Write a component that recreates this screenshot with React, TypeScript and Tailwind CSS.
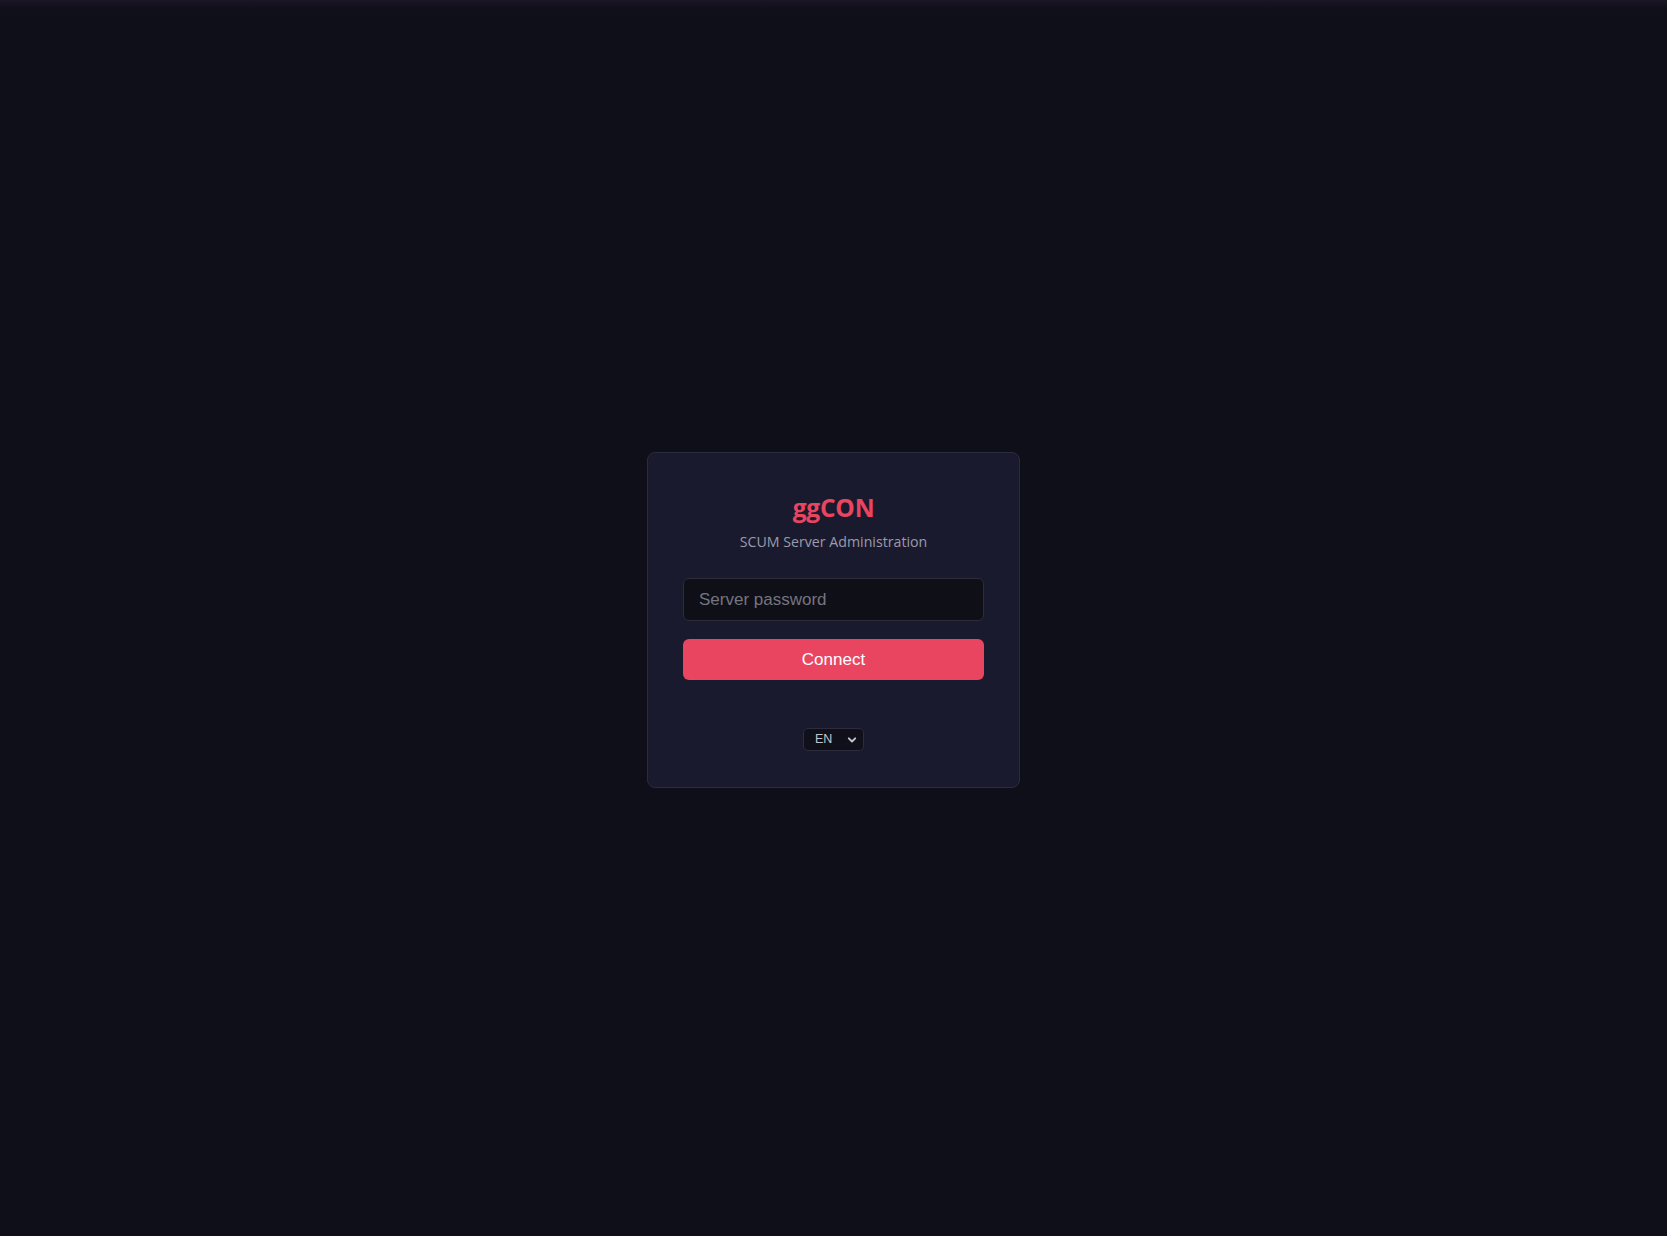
import { useState } from "react";

export default function App() {
  const [password, setPassword] = useState("");
  const [lang, setLang] = useState("en");

  return (
    <main className="flex min-h-screen items-center justify-center bg-[linear-gradient(180deg,#1a1626_0px,#111019_8px,#0f0f1a_16px)] pt-[4px] font-['Open_Sans',sans-serif]">
      <div className="flex w-[373px] flex-col rounded-lg border border-[#2a2b3d] bg-[#1a1a2e] px-[35px] pb-[36px] pt-[35px]">
        <h1 className="text-center text-[24.5px] font-bold leading-[40px] tracking-[-0.2px] text-[#e94560]">ggCON</h1>
        <p className="mt-[4px] text-center text-[14.2px] leading-[20px] text-[#9a9aab]">
          SCUM Server Administration
        </p>

        <input
          type="password"
          value={password}
          onChange={(event) => setPassword(event.target.value)}
          placeholder="Server password"
          className="mt-[26px] h-[43px] w-full rounded-md border border-[#2c2c3c] bg-[#0f0f18] px-[15px] font-['Liberation_Sans',Arial,sans-serif] text-[17px] text-gray-200 outline-none placeholder:text-[#75757f]"
        />

        <button
          type="button"
          className="mt-[18px] h-[41px] w-full rounded-md bg-[#e94560] font-['Liberation_Sans',Arial,sans-serif] text-[17px] text-white"
        >
          Connect
        </button>

        <div className="mt-[48px] flex justify-center">
          <div className="relative flex items-center">
            <select
              value={lang}
              onChange={(event) => setLang(event.target.value)}
              className="h-[23px] w-[61px] appearance-none rounded-[5px] border border-[#2c2c3c] bg-[#10101a] pl-[11px] font-['Liberation_Sans',Arial,sans-serif] text-[12.5px] leading-[21px] text-[#c4c4cc] outline-none"
            >
              <option value="en">EN</option>
              <option value="de">DE</option>
              <option value="ru">RU</option>
            </select>
            <svg
              className="pointer-events-none absolute right-[7px] top-1/2 h-[8px] w-[10px] -translate-y-1/2"
              viewBox="0 0 10 8"
              fill="none"
            >
              <path d="M1.8 2.3 5 5.5 8.2 2.3" stroke="#c4c4cc" strokeWidth="1.9" strokeLinecap="round" strokeLinejoin="round" />
            </svg>
          </div>
        </div>
      </div>
    </main>
  );
}
